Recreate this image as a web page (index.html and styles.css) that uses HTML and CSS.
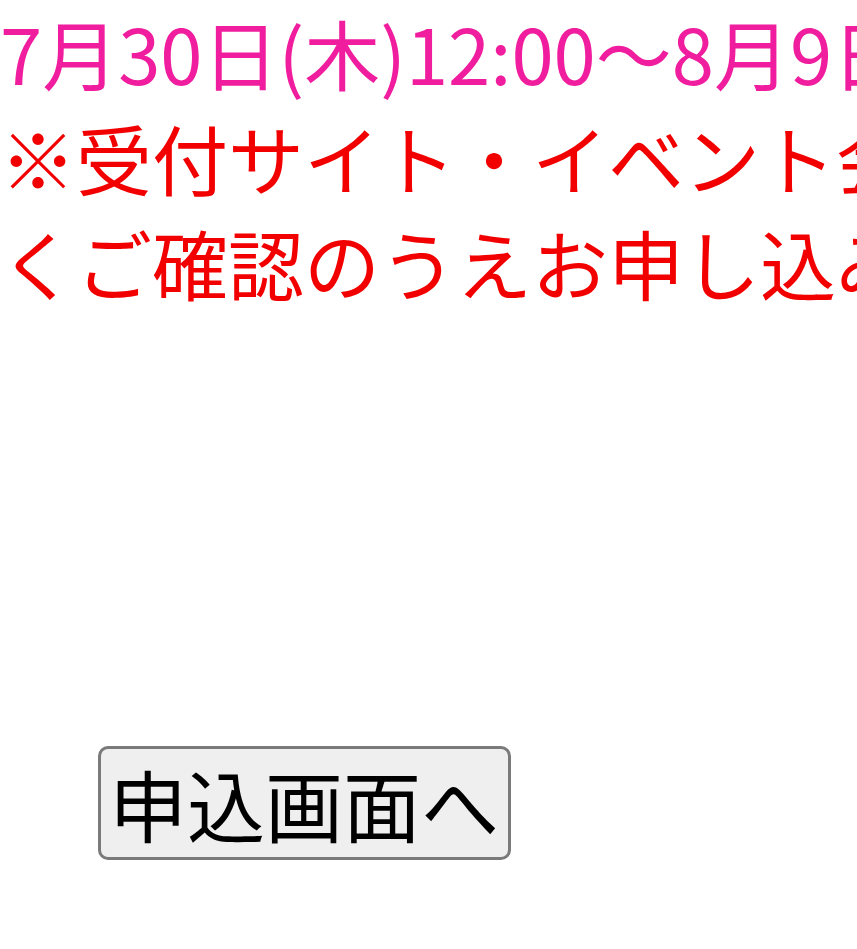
FILE: index.html
```html
<!DOCTYPE html>
<html lang="ja">
<head>
  <meta charset="UTF-8">
  <meta name="viewport" content="width=device-width, initial-scale=1.0">
  <title>申込受付</title>
  <link rel="stylesheet" href="styles.css">
</head>
<body>

<div class="notice">
  <p class="period">7月30日(木)12:00～8月9日(日)23:59</p>
  <p class="caution">※受付サイト・イベント会場の注意事項をよ<br>くご確認のうえお申し込みください。</p>
</div>

<form class="entry" action="#">
  <button type="button">申込画面へ</button>
</form>

</body>
</html>
```

FILE: styles.css
```css
:root {
  --pink: #f01e9e;
  --red: #f20000;
}

html, body {
  margin: 0;
  padding: 0;
  background: #fff;
  overflow: hidden;
}

body {
  font-family: "Noto Sans CJK JP", "Noto Sans", sans-serif;
  color: #000;
}

.notice {
  white-space: nowrap;
  overflow: hidden;
}

.notice p {
  margin: 0;
  font-size: 76px;
  line-height: 105px;
}

.period {
  color: var(--pink);
  line-height: 102px;
}

.caution {
  color: var(--red);
}

/* 申込ボタン */
.entry {
  margin: 431px 0 0 98px;
}

.entry button {
  font-family: "Noto Sans CJK JP", sans-serif;
  font-size: 78px;
  line-height: 108px;
  padding: 0 9px 0 8px;
  background: #efefef;
  color: #000;
  border: 3px solid #7a7a7a;
  border-radius: 10px;
}
```
